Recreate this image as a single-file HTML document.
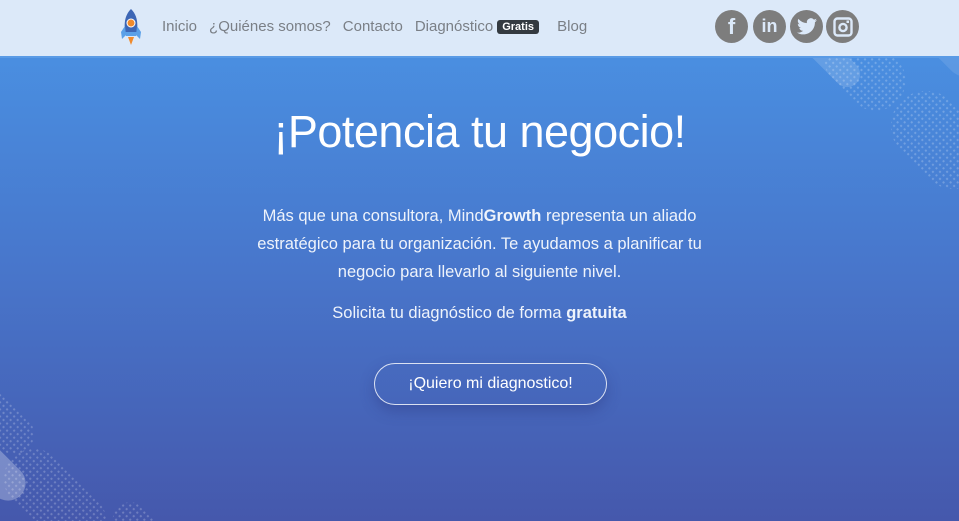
<!DOCTYPE html>
<html style="background:#4558ac"><head><meta charset="utf-8"><style>
*{margin:0;padding:0;box-sizing:border-box}
html,body{width:959px;height:521px;overflow:hidden}
body{font-family:"Liberation Sans",sans-serif}
.wrap{position:absolute;left:0;top:0;width:959px;height:521px;overflow:hidden;background:linear-gradient(180deg,#4a95e6 0%,#4877cc 50%,#4558ac 100%)}
.hdr{position:absolute;left:0;top:0;width:959px;height:58px;background:#dce9f9;border-bottom:2px solid #5a9be6;z-index:2}
.nav{position:absolute;top:18px;left:162px;font-size:15px;color:#7a7f86;white-space:nowrap}
.nav span{margin-right:12px}
.badge{background:#343a40;color:#fff;font-size:11px;font-weight:bold;padding:1px 5px;border-radius:3px;position:relative;top:-1px}
.soc{position:absolute;top:10px;width:33px;height:33px;border-radius:50%;background:#7d7d7d;display:flex;align-items:center;justify-content:center;color:#dce9f9;font-weight:bold}
.dots{position:absolute;border-radius:60px;background-image:radial-gradient(circle,rgba(255,255,255,.22) 1px,transparent 1.3px);background-size:5px 5px;transform:rotate(-45deg)}
.pill{position:absolute;border-radius:40px;background:rgba(255,255,255,.15);transform:rotate(-45deg)}
h1{position:absolute;top:106px;width:959px;text-align:center;color:#fff;font-size:45px;font-weight:300;letter-spacing:-0.5px}
.p{position:absolute;width:959px;text-align:center;color:#eef3fb;font-size:16.5px;line-height:28px}
.btn{position:absolute;left:374px;top:363px;width:233px;height:42px;border:1px solid rgba(255,255,255,.8);border-radius:21px;color:#fff;font-size:16px;text-align:center;line-height:40px;box-shadow:0 6px 14px rgba(40,50,120,.35)}
</style></head><body><div class="wrap">
<div class="dots" style="left:835px;top:25px;width:60px;height:90px;"></div>
<div class="dots" style="left:905px;top:85px;width:70px;height:110px;"></div>
<div class="pill" style="left:815px;top:15px;width:26px;height:80px;"></div>
<div class="pill" style="left:925px;top:-15px;width:45px;height:100px;background:rgba(255,255,255,.1)"></div>
<div class="dots" style="left:-20px;top:380px;width:40px;height:80px;"></div>
<div class="pill" style="left:-20px;top:440px;width:35px;height:65px;background:rgba(255,255,255,.28)"></div>
<div class="dots" style="left:25px;top:440px;width:60px;height:120px;"></div>
<div class="dots" style="left:118px;top:500px;width:35px;height:50px;"></div>
<div class="hdr">
<svg style="position:absolute;left:120px;top:8px" width="22" height="38" viewBox="0 0 22 38"><path d="M11 1C5 7 4 14 5 24h12C18 14 17 7 11 1z" fill="#3d66b5"/><path d="M5 18l-4 6 1 7 4-4zM17 18l4 6-1 7-4-4z" fill="#5aa0e8"/><path d="M5 24h12l-1 4H6z" fill="#5aa0e8"/><circle cx="11" cy="15" r="4" fill="#f08a2c" stroke="#fff" stroke-width="1"/><path d="M8 29h6l-3 8z" fill="#f08a2c"/></svg>
<div class="nav"><span>Inicio</span><span>¿Quiénes somos?</span><span>Contacto</span><span style="margin-right:4px">Diagnóstico</span><span class="badge">Gratis</span> <span style="margin-left:2px">Blog</span></div>
<div class="soc" style="left:715px;font-size:22px">f</div>
<div class="soc" style="left:753px;font-size:18px">in</div>
<div class="soc" style="left:790px"><svg width="20" height="17" viewBox="0 0 24 20"><path d="M24 2.4c-.9.4-1.8.6-2.8.8 1-.6 1.8-1.6 2.2-2.7-1 .6-2 1-3.1 1.2A4.9 4.9 0 0 0 11.9 6 14 14 0 0 1 1.7.9a4.9 4.9 0 0 0 1.5 6.6c-.8 0-1.6-.3-2.2-.6 0 2.4 1.7 4.4 3.9 4.8-.7.2-1.5.2-2.2.1.6 2 2.4 3.4 4.6 3.4A9.9 9.9 0 0 1 0 17.3 14 14 0 0 0 7.5 19.5c9 0 14-7.5 14-14v-.6c1-.7 1.8-1.6 2.5-2.5z" fill="#dce9f9"/></svg></div>
<div class="soc" style="left:826px"><svg width="20" height="20" viewBox="0 0 20 20"><rect x="1.5" y="1.5" width="17" height="17" rx="3" fill="none" stroke="#dce9f9" stroke-width="2.4"/><circle cx="10" cy="10.5" r="3.6" fill="none" stroke="#dce9f9" stroke-width="2.4"/><rect x="13.5" y="3.5" width="2.5" height="2.5" fill="#dce9f9"/></svg></div>
</div>
<h1>¡Potencia tu negocio!</h1>
<div class="p" style="top:202px">Más que una consultora, Mind<b style="font-weight:600">Growth</b> representa un aliado<br>estratégico para tu organización. Te ayudamos a planificar tu<br>negocio para llevarlo al siguiente nivel.</div>
<div class="p" style="top:299px">Solicita tu diagnóstico de forma <b style="font-weight:600">gratuita</b></div>
<div class="btn">¡Quiero mi diagnostico!</div>
</div></body></html>
